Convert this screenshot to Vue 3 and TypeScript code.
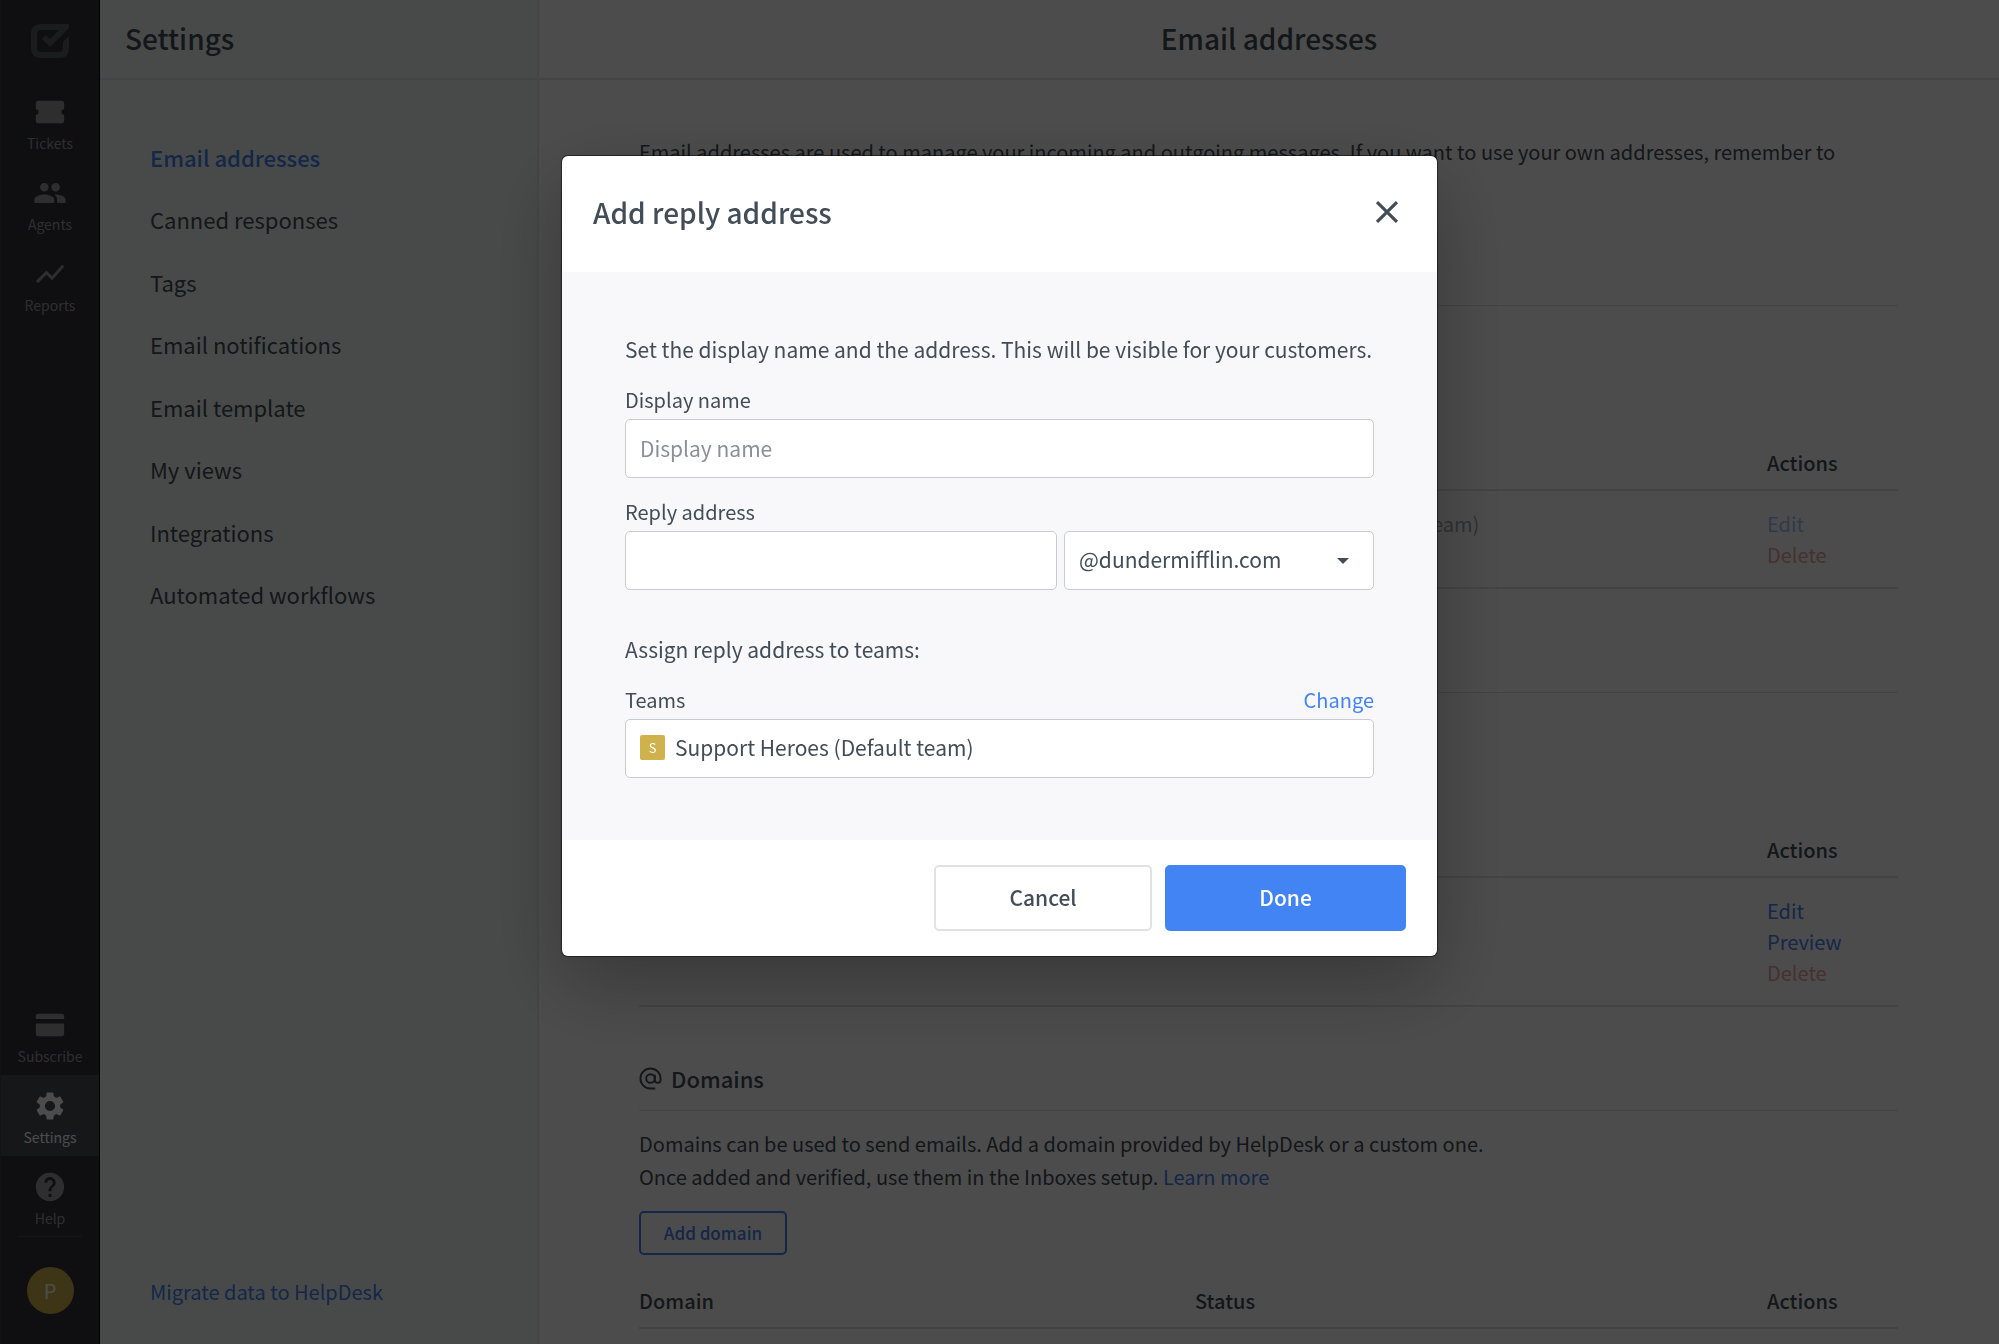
<script setup lang="ts">
import { ref } from 'vue'

interface RailItem {
  label: string
  icon: string
  active?: boolean
}
interface Action {
  label: string
  kind: 'link' | 'danger'
  muted?: boolean
}
interface Row {
  team?: string
  actions: Action[]
}
interface Section {
  id: string
  title?: string
  text?: string[]
  button?: string
  columns: string[]
  rows: Row[]
}

const railTop: RailItem[] = [
  {
    label: 'Tickets',
    icon: 'M22 10V6a2 2 0 0 0-2-2H4a2 2 0 0 0-2 2v4a2 2 0 0 1 0 4v4a2 2 0 0 0 2 2h16a2 2 0 0 0 2-2v-4a2 2 0 0 1 0-4z',
  },
  {
    label: 'Agents',
    icon: 'M16 11c1.660 0 2.990-1.340 2.990-3S17.660 5 16 5s-3 1.340-3 3 1.340 3 3 3zm-8 0c1.660 0 2.990-1.340 2.990-3S9.660 5 8 5 5 6.340 5 8s1.340 3 3 3zm0 2c-2.330 0-7 1.170-7 3.500V19h14v-2.500c0-2.330-4.670-3.500-7-3.500zm8 0c-.29 0-.62.020-.97.050 1.160.84 1.970 1.970 1.970 3.450V19h6v-2.500c0-2.330-4.670-3.500-7-3.500z',
  },
  { label: 'Reports', icon: 'M3.500 18.490l6-6.010 4 4L22 6.920l-1.410-1.410-7.090 7.970-4-4L2 16.990z' },
]

const railBottom: RailItem[] = [
  {
    label: 'Subscribe',
    icon: 'M4 4h16a2 2 0 0 1 2 2v1.800H2V6a2 2 0 0 1 2-2zM2 11h20v7a2 2 0 0 1-2 2H4a2 2 0 0 1-2-2z',
  },
  {
    label: 'Settings',
    icon: 'M19.140 12.940c.04-.3.060-.61.060-.94 0-.32-.02-.64-.07-.94l2.030-1.580a.49.49 0 0 0 .12-.61l-1.920-3.320a.49.49 0 0 0-.59-.22l-2.390.96c-.5-.38-1.030-.7-1.620-.94l-.36-2.540a.48.48 0 0 0-.48-.41h-3.840c-.24 0-.43.17-.47.41l-.36 2.540c-.59.24-1.130.57-1.620.94l-2.390-.96a.48.48 0 0 0-.59.22L2.740 8.870a.48.48 0 0 0 .12.61l2.030 1.580c-.05.3-.09.63-.09.94s.02.64.07.94l-2.030 1.580a.49.49 0 0 0-.12.61l1.920 3.320c.12.22.37.29.59.22l2.390-.96c.5.38 1.030.7 1.620.94l.36 2.540c.05.24.24.41.48.41h3.840c.24 0 .44-.17.47-.41l.36-2.540c.59-.24 1.130-.56 1.620-.94l2.390.96c.22.08.47 0 .59-.22l1.920-3.320a.48.48 0 0 0-.12-.61zM12 15.600A3.600 3.600 0 1 1 12 8.400a3.600 3.600 0 0 1 0 7.200z',
    active: true,
  },
  {
    label: 'Help',
    icon: 'M12 2C6.480 2 2 6.480 2 12s4.480 10 10 10 10-4.480 10-10S17.520 2 12 2zm1 17h-2v-2h2v2zm2.070-7.750l-.9.920C13.450 12.900 13 13.500 13 15h-2v-.5c0-1.100.45-2.100 1.170-2.830l1.240-1.260c.37-.36.59-.86.59-1.410 0-1.100-.9-2-2-2s-2 .9-2 2H8c0-2.210 1.790-4 4-4s4 1.790 4 4c0 .88-.36 1.680-.93 2.250z',
  },
]

const settingsNav = [
  'Email addresses',
  'Canned responses',
  'Tags',
  'Email notifications',
  'Email template',
  'My views',
  'Integrations',
  'Automated workflows',
]
const activeNav = ref('Email addresses')

const sections: Section[] = [
  {
    id: 'reply',
    columns: ['', '', 'Actions'],
    rows: [
      {
        team: 'Support Heroes (Default team)',
        actions: [
          { label: 'Edit', kind: 'link', muted: true },
          { label: 'Delete', kind: 'danger', muted: true },
        ],
      },
    ],
  },
  {
    id: 'inboxes',
    columns: ['', '', 'Actions'],
    rows: [
      {
        actions: [
          { label: 'Edit', kind: 'link' },
          { label: 'Preview', kind: 'link' },
          { label: 'Delete', kind: 'danger', muted: true },
        ],
      },
    ],
  },
  {
    id: 'domains',
    title: 'Domains',
    text: [
      'Domains can be used to send emails. Add a domain provided by HelpDesk or a custom one.',
      'Once added and verified, use them in the Inboxes setup.',
    ],
    button: 'Add domain',
    columns: ['Domain', 'Status', 'Actions'],
    rows: [],
  },
]

const displayName = ref('')
const replyAddress = ref('')
const domain = ref('@dundermifflin.com')
const open = ref(true)
</script>

<template>
  <div class="app">
    <nav class="rail" aria-label="Main">
      <div class="logo">
        <svg viewBox="0 0 38 34" aria-hidden="true">
          <path d="M38 0H10Q0 0 0 10v14q0 10 10 10h18q10 0 10-10V12l-6 6v6q0 4-4 4H10q-4 0-4-4V10q0-4 4-4h18l-9 9-4-4-4 4 8 8L38 4z" />
        </svg>
      </div>
      <a v-for="item in railTop" :key="item.label" href="#" class="rail-item">
        <svg viewBox="0 0 24 24" aria-hidden="true"><path :d="item.icon" /></svg>
        <span>{{ item.label }}</span>
      </a>
      <div class="rail-gap"></div>
      <a
        v-for="item in railBottom"
        :key="item.label"
        href="#"
        class="rail-item"
        :class="{ active: item.active }"
      >
        <svg viewBox="0 0 24 24" aria-hidden="true"><path :d="item.icon" /></svg>
        <span>{{ item.label }}</span>
      </a>
      <div class="profile-area">
        <button type="button" class="profile">P</button>
      </div>
    </nav>

    <aside class="settings">
      <header class="bar"><h2>Settings</h2></header>
      <nav class="settings-nav" aria-label="Settings">
        <a
          v-for="item in settingsNav"
          :key="item"
          href="#"
          :class="{ current: item === activeNav }"
          @click.prevent="activeNav = item"
          >{{ item }}</a
        >
      </nav>
      <a href="#" class="migrate">Migrate data to HelpDesk</a>
    </aside>

    <main class="main">
      <header class="bar centered"><h1>Email addresses</h1></header>
      <div class="content">
        <p class="lead">
          Email addresses are used to manage your incoming and outgoing messages. If you want to use your own
          addresses, remember to
        </p>
        <section v-for="section in sections" :key="section.id">
          <div class="section-head">
            <h3 v-if="section.title">
              <svg viewBox="0 0 24 24" aria-hidden="true">
                <circle cx="12" cy="12" r="4.500" />
                <path d="M16.500 8v5.500a3 3 0 0 0 6 0V12A10.500 10.500 0 1 0 12 22.500h5" />
              </svg>
              {{ section.title }}
            </h3>
          </div>
          <div class="section-intro">
            <p v-if="section.text">
              {{ section.text[0] }}<br />{{ section.text[1] }} <a href="#">Learn more</a>
            </p>
            <button v-if="section.button" type="button" class="outline">{{ section.button }}</button>
          </div>
          <table>
            <thead>
              <tr>
                <th v-for="(column, i) in section.columns" :key="i" scope="col">{{ column }}</th>
              </tr>
            </thead>
            <tbody>
              <tr v-for="(row, i) in section.rows" :key="i">
                <td></td>
                <td><span class="muted">{{ row.team }}</span></td>
                <td>
                  <a
                    v-for="action in row.actions"
                    :key="action.label"
                    href="#"
                    class="action"
                    :class="[action.kind, { muted: action.muted }]"
                    >{{ action.label }}</a
                  >
                </td>
              </tr>
            </tbody>
          </table>
        </section>
      </div>
    </main>

    <div v-if="open" class="overlay">
      <form class="modal" role="dialog" aria-labelledby="modal-title" @submit.prevent="open = false">
        <header class="modal-head">
          <h2 id="modal-title">Add reply address</h2>
          <button type="button" class="close" aria-label="Close" @click="open = false">
            <svg viewBox="0 0 24 24" aria-hidden="true"><path d="M5.700 5.700l12.600 12.600M18.300 5.700L5.700 18.300" /></svg>
          </button>
        </header>
        <div class="modal-body">
          <p>Set the display name and the address. This will be visible for your customers.</p>
          <div class="field">
            <label for="display-name">Display name</label>
            <input id="display-name" v-model="displayName" type="text" placeholder="Display name" />
          </div>
          <div class="field">
            <label for="reply-address">Reply address</label>
            <div class="address">
              <input id="reply-address" v-model="replyAddress" type="text" />
              <div class="select">
                <select v-model="domain" aria-label="Domain">
                  <option>@dundermifflin.com</option>
                </select>
                <svg viewBox="0 0 12 6" aria-hidden="true"><path d="M0 0h12L6 6z" /></svg>
              </div>
            </div>
          </div>
          <p class="assign">Assign reply address to teams:</p>
          <div class="field">
            <div class="label-row">
              <span id="teams-label">Teams</span>
              <a href="#">Change</a>
            </div>
            <div class="team-box" role="group" aria-labelledby="teams-label">
              <span class="team-mark">S</span>
              <span>Support Heroes (Default team)</span>
            </div>
          </div>
        </div>
        <footer class="modal-foot">
          <button type="button" class="cancel" @click="open = false">Cancel</button>
          <button type="submit" class="done">Done</button>
        </footer>
      </form>
    </div>
  </div>
</template>

<style>
body {
  margin: 0;
  overflow: hidden;
}
</style>

<style scoped>
* {
  box-sizing: border-box;
}
.app {
  display: flex;
  height: 100vh;
  overflow: hidden;
  background: #fff;
  color: #424d57;
  font-family: 'Noto Sans CJK SC', 'Noto Sans', sans-serif;
  font-size: 20px;
  line-height: 31px;
}
h1,
h2,
h3,
p {
  margin: 0;
}
a {
  color: #4384f5;
  text-decoration: none;
}
button,
input,
select {
  font: inherit;
  color: inherit;
}
button {
  padding: 0;
  cursor: pointer;
}

.rail {
  display: flex;
  flex: none;
  flex-direction: column;
  width: 100px;
  border-right: 1px solid #000;
  border-left: 1px solid #3c3a40;
  background: #342f38;
}
.logo {
  display: flex;
  align-items: center;
  justify-content: center;
  height: 81px;
}
.logo svg {
  width: 38px;
  height: 34px;
  fill: #5c6064;
}
.rail-item {
  display: flex;
  flex-direction: column;
  gap: 2px;
  align-items: center;
  height: 81px;
  padding-top: 14px;
  color: #9c9c9c;
  font-size: 14px;
  line-height: 24px;
}
.rail-item svg {
  width: 34px;
  height: 34px;
  fill: currentColor;
}
.rail-item.active {
  background: #4c4e52;
  color: #fff;
}
.rail-gap {
  flex: 1;
}
.profile-area {
  display: flex;
  justify-content: center;
  margin: -1px 17px 0;
  padding: 30px 0;
  border-top: 1px solid #4c4a50;
}
.profile {
  width: 47px;
  height: 47px;
  border: 0;
  border-radius: 50%;
  background: #cfb24c;
  color: #fff;
}

.settings {
  display: flex;
  flex: none;
  flex-direction: column;
  width: 439px;
  border-right: 2px solid #e6e8e8;
  background: #f0f8f5;
}
.bar {
  display: flex;
  flex: none;
  align-items: center;
  height: 80px;
  padding: 0 25px 2px;
  border-bottom: 2px solid #e2e4e6;
}
.bar.centered {
  justify-content: center;
}
.bar h1,
.bar h2,
.modal-head h2 {
  font-size: 28px;
  font-weight: 500;
  line-height: 40px;
}
.settings-nav {
  display: grid;
  grid-auto-rows: 1fr;
  height: 500px;
  margin-top: 46px;
}
.settings-nav a {
  display: flex;
  align-items: center;
  padding-left: 50px;
  color: #424d57;
  font-size: 22px;
}
.settings-nav a.current {
  color: #4384f5;
  font-weight: 500;
}
.migrate {
  margin: auto 0 37px 50px;
}

.main {
  flex: 1;
  min-width: 0;
}
.content {
  padding: 55px 101px 0 100px;
}
.lead {
  min-height: 67px;
  line-height: 33px;
}
.section-head {
  display: flex;
  align-items: flex-end;
  height: 104px;
  padding-bottom: 16px;
  border-bottom: 1px solid #dfe1e3;
}
.section-head h3 {
  display: flex;
  gap: 9px;
  align-items: center;
  font-size: 22px;
  font-weight: 500;
}
.section-head svg {
  width: 23px;
  height: 23px;
  fill: none;
  stroke: currentColor;
  stroke-width: 2;
}
.section-intro {
  min-height: 111px;
  padding-top: 16px;
}
.section-intro p {
  margin-bottom: 18px;
  line-height: 33px;
}
.outline {
  width: 148px;
  height: 44px;
  border: 2px solid #4384f5;
  border-radius: 5px;
  background: transparent;
  color: #4384f5;
  font-size: 17px;
  font-weight: 500;
  line-height: 24px;
}
table {
  width: 100%;
  border-collapse: separate;
  border-spacing: 0;
  table-layout: fixed;
}
th,
td {
  padding: 17px 0;
  border-bottom: 2px solid #dfe1e3;
  text-align: left;
  vertical-align: top;
}
th {
  height: 74px;
  padding: 30px 0 11px;
  font-weight: 500;
}
th:nth-child(1) {
  width: 556px;
}
th:nth-child(3) {
  width: 131px;
}
.action {
  display: block;
}
.danger {
  color: #d64545;
}
.muted {
  opacity: 0.5;
}

.overlay {
  position: fixed;
  inset: 0;
  display: flex;
  align-items: flex-start;
  justify-content: center;
  padding-top: 156px;
  background: rgba(0, 0, 0, 0.7);
}
.modal {
  width: 875px;
  border-radius: 6px;
  background: #fff;
  box-shadow:
    0 0 1px 1px rgba(0, 0, 0, 0.5),
    0 28px 80px rgba(0, 0, 0, 0.28);
}
.modal-head {
  display: flex;
  align-items: center;
  justify-content: space-between;
  height: 116px;
  padding: 0 31px 4px;
}
.close {
  width: 38px;
  height: 38px;
  border: 0;
  background: none;
}
.close svg {
  display: block;
  width: 38px;
  height: 38px;
  fill: none;
  stroke: currentColor;
  stroke-width: 2;
}
.modal-body {
  padding: 60px 63px 62px;
  background: #f8f8fa;
  font-size: 21px;
}
.modal-body p {
  margin-bottom: 19px;
  line-height: 34px;
}
.modal-body .assign {
  margin-top: 42px;
}
.field + .field {
  margin-top: 19px;
}
.field label,
.label-row {
  display: flex;
  justify-content: space-between;
  margin-bottom: 4px;
  font-size: 20px;
  line-height: 30px;
}
input,
select,
.team-box {
  width: 100%;
  height: 59px;
  padding: 0 14px 2px;
  border: 1px solid #c8cbcf;
  border-radius: 5px;
  background: #fff;
}
input::placeholder {
  color: #8a9098;
  opacity: 1;
}
.address {
  display: flex;
  gap: 7px;
}
.address input {
  flex: 1;
  min-width: 0;
}
.select {
  position: relative;
  width: 310px;
}
.select select {
  display: block;
  appearance: none;
}
.select svg {
  position: absolute;
  top: 27px;
  right: 25px;
  width: 12px;
  height: 6px;
  fill: currentColor;
  pointer-events: none;
}
.team-box {
  display: flex;
  gap: 10px;
  align-items: center;
}
.team-mark {
  width: 25px;
  height: 25px;
  border-radius: 2px;
  background: #cfb24c;
  color: #fff;
  font-size: 13px;
  line-height: 25px;
  text-align: center;
}
.modal-foot {
  display: flex;
  gap: 13px;
  justify-content: flex-end;
  padding: 25px 31px;
}
.modal-foot button {
  width: 218px;
  height: 66px;
  padding-bottom: 2px;
  border: 2px solid #e2e2e4;
  border-radius: 5px;
  background: #fff;
  font-size: 21px;
  font-weight: 500;
}
.modal-foot .done {
  width: 241px;
  border-color: #4384f5;
  background: #4384f5;
  color: #fff;
}
</style>
